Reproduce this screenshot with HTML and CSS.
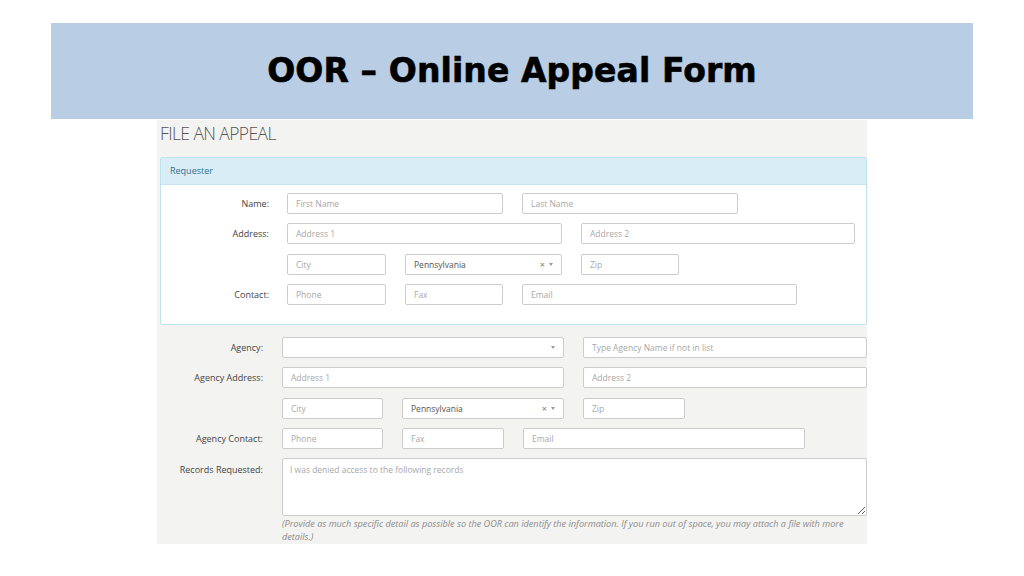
FILE: index.html
```html
<!DOCTYPE html>
<html>
<head>
<meta charset="utf-8">
<link rel="stylesheet" href="styles.css">
</head>
<body>
<header class="band"><h1 class="title">OOR – Online Appeal Form</h1></header>
<main class="shot">
  <h2 class="page-title">FILE AN APPEAL</h2>
  <section class="panel">
    <div class="panel-head">Requester</div>
    <div class="panel-body">
      <div class="row"><label class="lbl">Name:</label><div class="fields"><input class="w216" placeholder="First Name"><input class="w216" placeholder="Last Name"></div></div>
      <div class="row"><label class="lbl">Address:</label><div class="fields"><input class="w275" placeholder="Address 1"><input class="w274" placeholder="Address 2"></div></div>
      <div class="row"><label class="lbl"></label><div class="fields"><input class="w99" placeholder="City"><div class="sel w157"><span class="sel-val">Pennsylvania</span><span class="sel-x">×</span><span class="sel-arrow"></span></div><input class="w98" placeholder="Zip"></div></div>
      <div class="row"><label class="lbl">Contact:</label><div class="fields"><input class="w99" placeholder="Phone"><input class="w98" placeholder="Fax"><input class="w275" placeholder="Email"></div></div>
    </div>
  </section>
  <section class="agency">
    <div class="row"><label class="lbl">Agency:</label><div class="fields"><div class="sel w282"><span class="sel-val"></span><span class="sel-arrow"></span></div><input class="w283" placeholder="Type Agency Name if not in list"></div></div>
    <div class="row"><label class="lbl">Agency Address:</label><div class="fields"><input class="w282" placeholder="Address 1"><input class="w283" placeholder="Address 2"></div></div>
    <div class="row"><label class="lbl"></label><div class="fields"><input class="w101" placeholder="City"><div class="sel w162"><span class="sel-val">Pennsylvania</span><span class="sel-x">×</span><span class="sel-arrow"></span></div><input class="w102" placeholder="Zip"></div></div>
    <div class="row"><label class="lbl">Agency Contact:</label><div class="fields"><input class="w101" placeholder="Phone"><input class="w102" placeholder="Fax"><input class="w282" placeholder="Email"></div></div>
    <div class="row row-top"><label class="lbl">Records Requested:</label><div class="fields col"><textarea class="ta" placeholder="I was denied access to the following records"></textarea><p class="help">(Provide as much specific detail as possible so the OOR can identify the information. If you run out of space, you may attach a file with more details.)</p></div></div>
  </section>
</main>
</body>
</html>
```

FILE: styles.css
```css
* { box-sizing: border-box; }
body { margin: 0; background: #fff; font-family: "Open Sans", "Liberation Sans", sans-serif; }
.band {
  margin: 23px 51px 0;
  height: 96px;
  background: #b9cde4;
  display: flex;
  align-items: center;
  justify-content: center;
}
.title {
  margin: 0;
  padding-bottom: 2px;
  font-family: "DejaVu Sans", sans-serif;
  font-weight: bold;
  font-size: 33px;
  color: #000;
  letter-spacing: 0.1px;
  -webkit-text-stroke: 0.6px #000;
}
.shot {
  margin: 1px 0 0 157px;
  width: 710px;
  height: 424px;
  background: #f3f3f1;
  padding: 2px 0 0 0;
}
.page-title {
  margin: 0 0 13px 3px;
  font-weight: 300;
  font-size: 17.5px;
  line-height: 22px;
  color: #555;
  letter-spacing: -0.6px;
}
.panel {
  margin-left: 3px;
  width: 707px;
  border: 1px solid #bfe3ee;
  border-radius: 2px;
  background: #fff;
}
.panel-head {
  height: 27px;
  background: #d9edf7;
  border-bottom: 1px solid #c6e5f0;
  color: #31708f;
  font-size: 9px;
  line-height: 26px;
  padding-left: 9px;
}
.panel-body { padding: 8px 0 19px; }
.row { display: flex; gap: 18px; margin-bottom: 9.3px; align-items: center; }
.row:last-child { margin-bottom: 0; }
.lbl {
  width: 108px;
  text-align: right;
  font-size: 9px;
  color: #444;
  flex: none;
}
.fields { display: flex; gap: 19px; }
.fields.col { flex-direction: column; gap: 0; }
input, .sel, textarea {
  height: 21px;
  border: 1px solid #ccc;
  border-radius: 2px;
  background: #fff;
  font-family: "Open Sans", sans-serif;
  font-size: 8.5px;
  padding: 0 8px;
  color: #555;
  outline: none;
  flex: none;
}
input::placeholder, textarea::placeholder { color: #a8a8a8; }
.sel { display: flex; align-items: center; }
.sel-val { flex: 1; font-size: 8.5px; color: #555; }
.sel-x { font-size: 9px; color: #777; margin-right: 4px; }
.sel-arrow {
  width: 0; height: 0;
  border-left: 2.5px solid transparent;
  border-right: 2.5px solid transparent;
  border-top: 3px solid #999;
}
.w98 { width: 98px; } .w99 { width: 99px; } .w101 { width: 101px; } .w102 { width: 102px; }
.w157 { width: 157px; } .w162 { width: 162px; }
.w216 { width: 216px; } .w274 { width: 274px; } .w275 { width: 275px; }
.w282 { width: 282px; } .w283 { width: 284px; }
.agency { padding-top: 12px; }
.agency .row { gap: 19px; margin-bottom: 9.4px; }
.agency .lbl { width: 106px; }
.row-top { align-items: flex-start; }
.row-top .lbl { padding-top: 5px; }
.ta {
  width: 585px;
  height: 58px;
  padding: 5px 7px;
  resize: vertical;
  display: block;
}
.help {
  margin: 1px 0 0;
  width: 584px;
  font-size: 9.15px;
  line-height: 13px;
  font-style: italic;
  font-weight: 400;
  color: #8c8c8c;
}
```
